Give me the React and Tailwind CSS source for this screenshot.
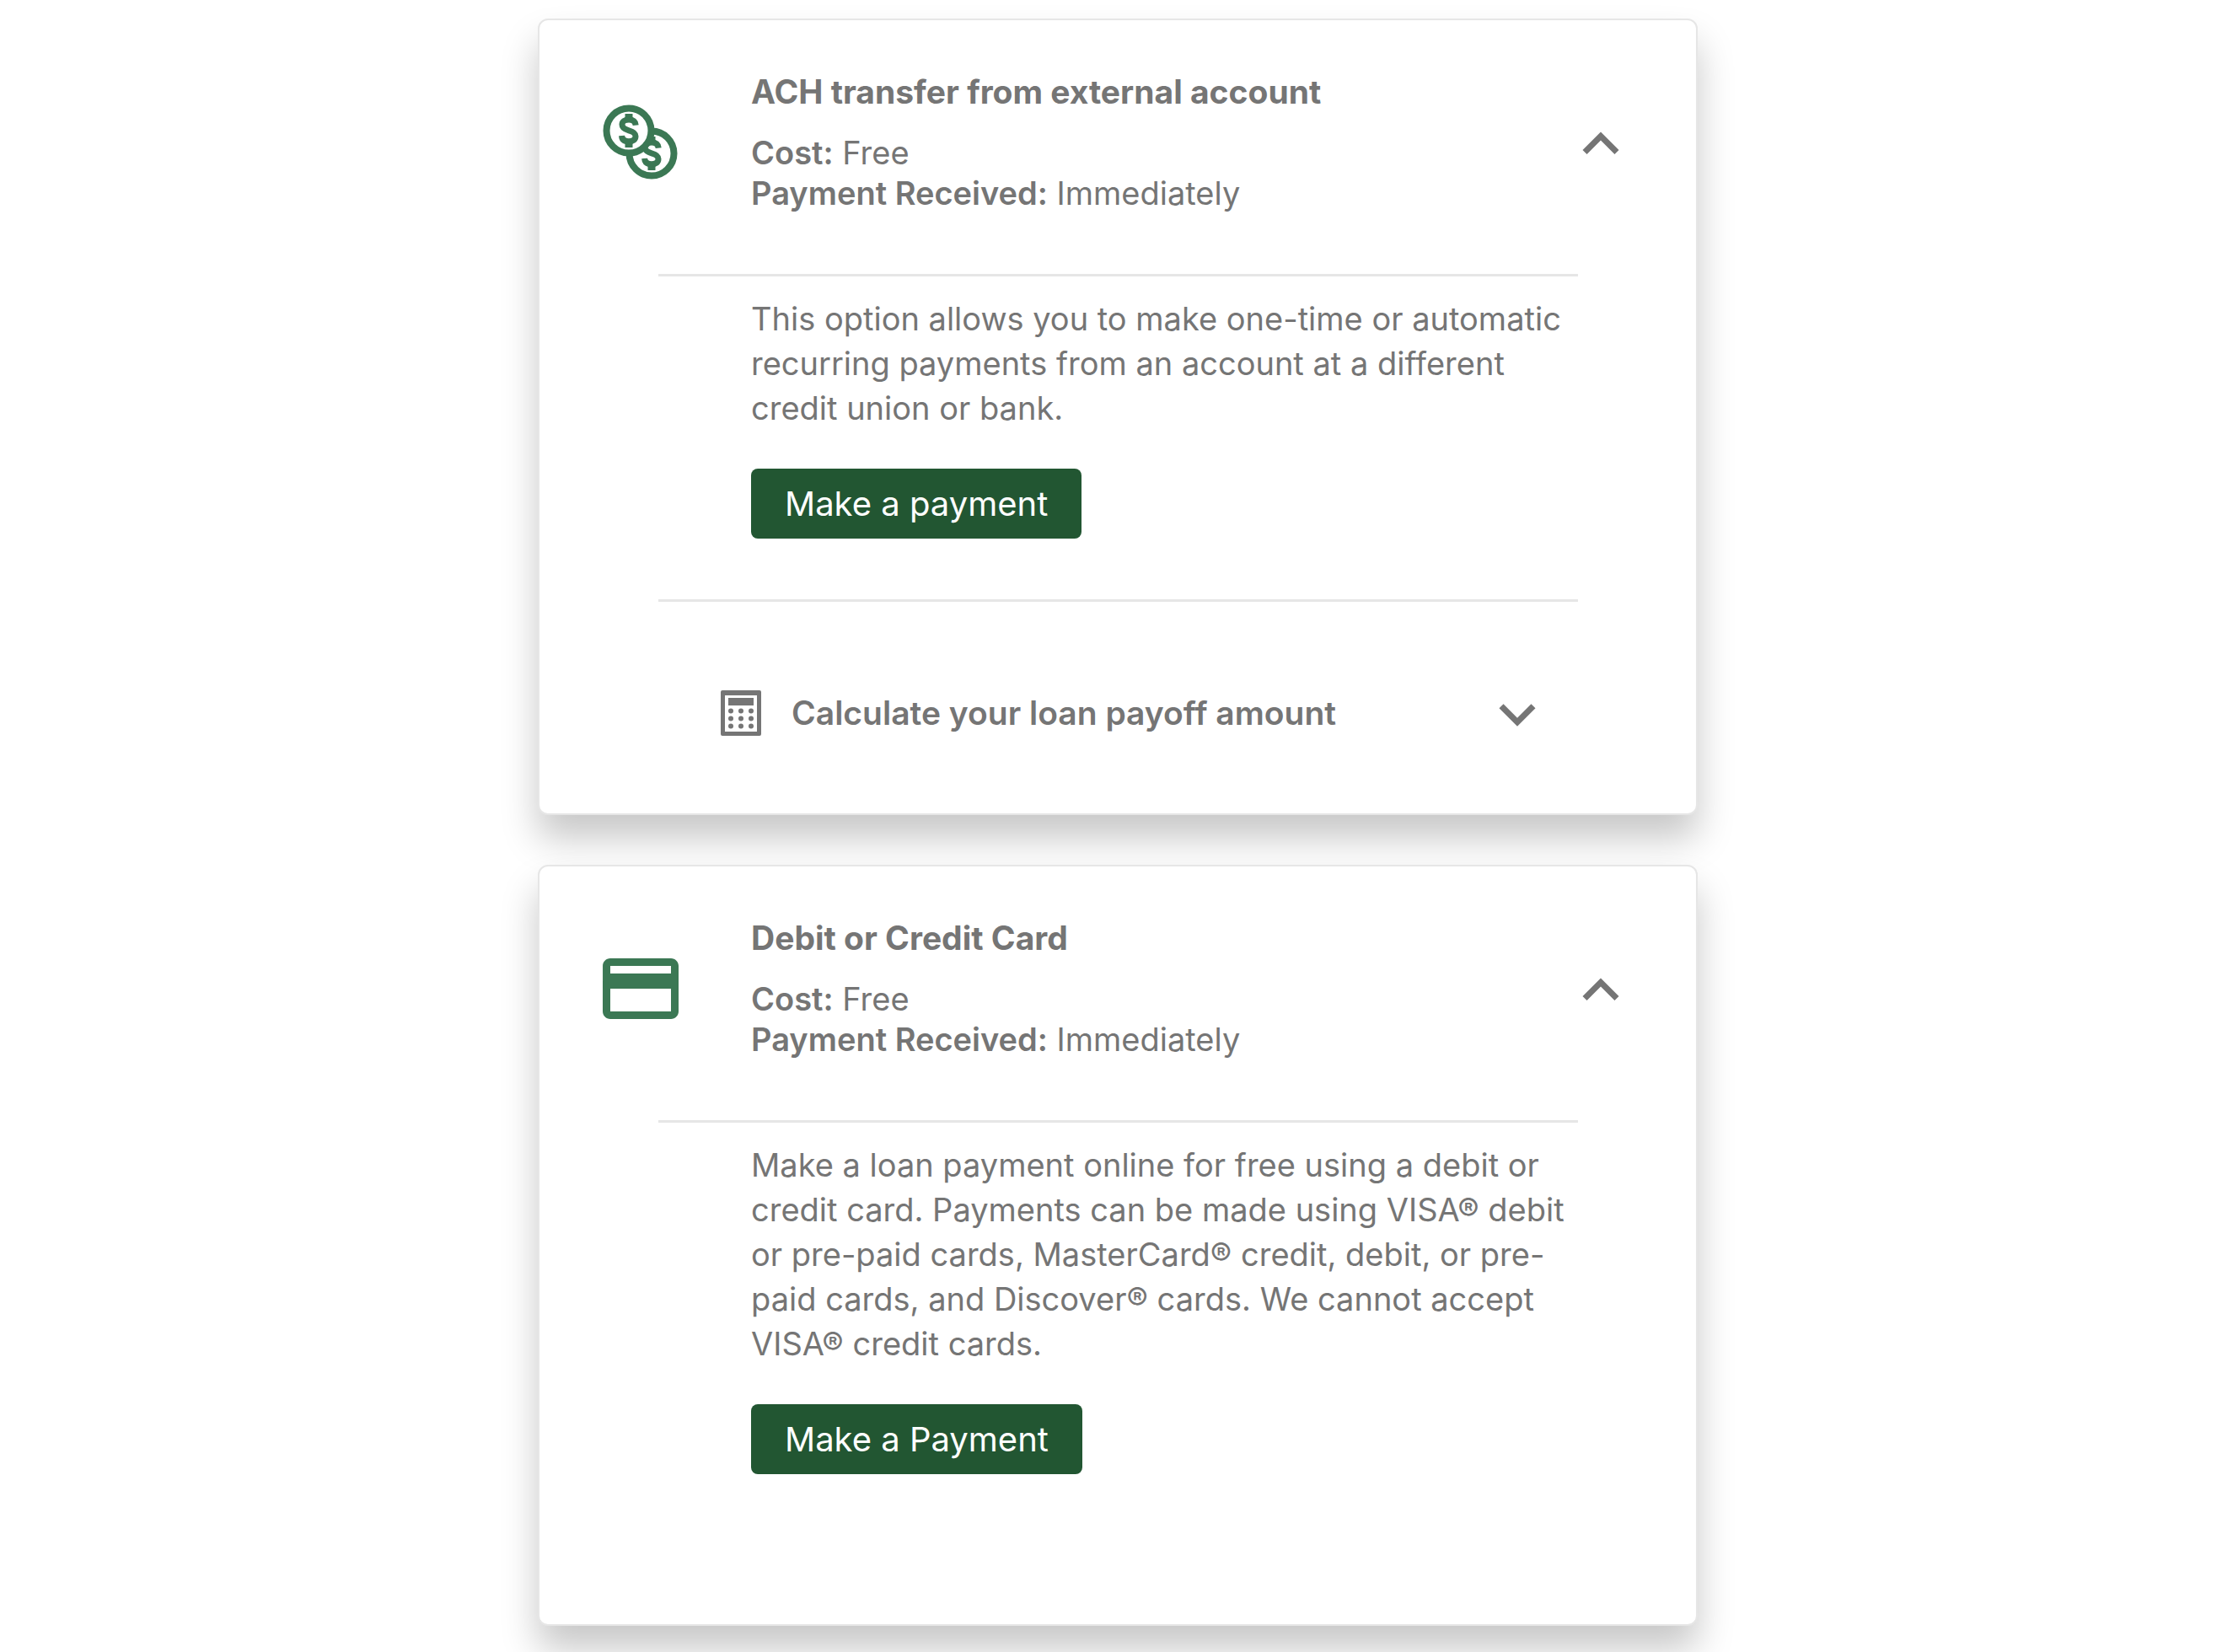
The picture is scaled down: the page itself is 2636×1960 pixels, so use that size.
import React, { useState } from "react";

const methods = [
  {
    id: "ach",
    title: "ACH transfer from external account",
    cost: "Free",
    received: "Immediately",
    icon: CoinsIcon,
    description:
      "This option allows you to make one-time or automatic recurring payments from an account at a different credit union or bank.",
    action: "Make a payment",
    calculator: true,
  },
  {
    id: "card",
    title: "Debit or Credit Card",
    cost: "Free",
    received: "Immediately",
    icon: CreditCardIcon,
    description:
      "Make a loan payment online for free using a debit or credit card. Payments can be made using VISA® debit or pre-paid cards, MasterCard® credit, debit, or pre-paid cards, and Discover® cards. We cannot accept VISA® credit cards.",
    action: "Make a Payment",
    calculator: false,
  },
];

function Coin({ cx, cy }) {
  return (
    <g transform={`translate(${cx} ${cy})`} fill="none" stroke="currentColor">
      <circle r="26.5" fill="#fff" strokeWidth="8" />
      <path
        d="M8.2 -6.4C7.8 -11 4.8 -13 0 -13C-5 -13 -8 -10.8 -8 -7.2C-8 -3.2 -5 -1.6 0 -0.2C5.2 1.2 8 3 8 6.6C8 10.6 5.2 12.8 0 12.8C-5.2 12.8 -8.2 10.6 -8.4 6"
        strokeWidth="7"
      />
      <path d="M0 -20V-12M0 12V20" strokeWidth="9" />
    </g>
  );
}

function CoinsIcon() {
  return (
    <svg viewBox="0 0 90 90" className="size-[90px]" aria-hidden="true">
      <Coin cx={58} cy={58} />
      <Coin cx={31} cy={31} />
    </svg>
  );
}

function CreditCardIcon() {
  return (
    <svg viewBox="2 2 20 20" fill="currentColor" className="size-[90px]" aria-hidden="true">
      <path d="M20 4H4c-1.11 0-1.99.89-1.99 2L2 18c0 1.11.89 2 2 2h16c1.11 0 2-.89 2-2V6c0-1.11-.89-2-2-2zm0 14H4v-6h16v6zm0-10H4V6h16v2z" />
    </svg>
  );
}

function CalculatorIcon() {
  return (
    <svg viewBox="0 0 48 54" fill="currentColor" className="h-[54px] w-12 shrink-0" aria-hidden="true">
      <path
        fillRule="evenodd"
        d="M2 0H46Q48 0 48 2V52Q48 54 46 54H2Q0 54 0 52V2Q0 0 2 0ZM5 6V49H43V6Z"
      />
      <rect x="9" y="9" width="30" height="9" />
      {[24.5, 33.5, 42.5].map((y) =>
        [12, 24, 36].map((x) => <circle key={`${x}-${y}`} cx={x} cy={y} r="3" />)
      )}
    </svg>
  );
}

function Chevron({ up }) {
  return (
    <svg viewBox="0 0 24 24" fill="currentColor" className="size-[86px]" aria-hidden="true">
      {up ? (
        <path d="M12 8.5l-6 6 1.41 1.41L12 11.33l4.59 4.58L18 14.5z" />
      ) : (
        <path d="M16.59 9L12 13.58 7.41 9 6 10.41l6 6 6-6z" />
      )}
    </svg>
  );
}

function PaymentCard({ method }) {
  const [open, setOpen] = useState(true);
  const Icon = method.icon;

  return (
    <section className="rounded-xl border-2 border-[#e6e6e6] bg-white shadow-[0_28px_44px_rgba(0,0,0,0.22)]">
      <div className="flex items-center pt-[61px] pr-[70px] pb-[72px] pl-[75px]">
        <div className="w-44 shrink-0 text-[#3b7854]">
          <Icon />
        </div>
        <div className="flex-1 leading-[48px]">
          <h2 className="mb-6 text-[39px] font-bold">{method.title}</h2>
          <p>
            <strong className="font-semibold">Cost:</strong> {method.cost}
          </p>
          <p>
            <strong className="font-semibold">Payment Received:</strong> {method.received}
          </p>
        </div>
        <button
          type="button"
          aria-expanded={open}
          aria-controls={`${method.id}-details`}
          aria-label={`Toggle ${method.title}`}
          onClick={() => setOpen(!open)}
        >
          <Chevron up={open} />
        </button>
      </div>

      {open && (
        <div id={`${method.id}-details`} className="mr-[140px] ml-[141px]">
          <hr className="border-t-3 border-[#e6e6e6]" />
          <div className={method.calculator ? "pt-6 pb-[72px] pl-[110px]" : "pt-6 pb-[178px] pl-[110px]"}>
            <p className="leading-[53px]">{method.description}</p>
            <button
              type="button"
              className="mt-[45px] flex h-[83px] items-center rounded-lg bg-[#225632] px-10 text-[40px] text-white"
            >
              {method.action}
            </button>
          </div>

          {method.calculator && (
            <>
              <hr className="border-t-3 border-[#e6e6e6]" />
              <button
                type="button"
                aria-expanded="false"
                className="flex w-full items-center pt-[89px] pr-[29px] pb-[76px] pl-[74px] text-left text-[39px] font-semibold"
              >
                <CalculatorIcon />
                <span className="ml-9 flex-1">Calculate your loan payoff amount</span>
                <Chevron />
              </button>
            </>
          )}
        </div>
      )}
    </section>
  );
}

export default function App() {
  return (
    <main className="bg-white pt-[22px] pb-8 pl-4 font-['Inter',sans-serif] text-[38px] text-[#757575]">
      <div className="mx-auto flex max-w-[1376px] flex-col gap-[59px]">
        {methods.map((method) => (
          <PaymentCard key={method.id} method={method} />
        ))}
      </div>
    </main>
  );
}
